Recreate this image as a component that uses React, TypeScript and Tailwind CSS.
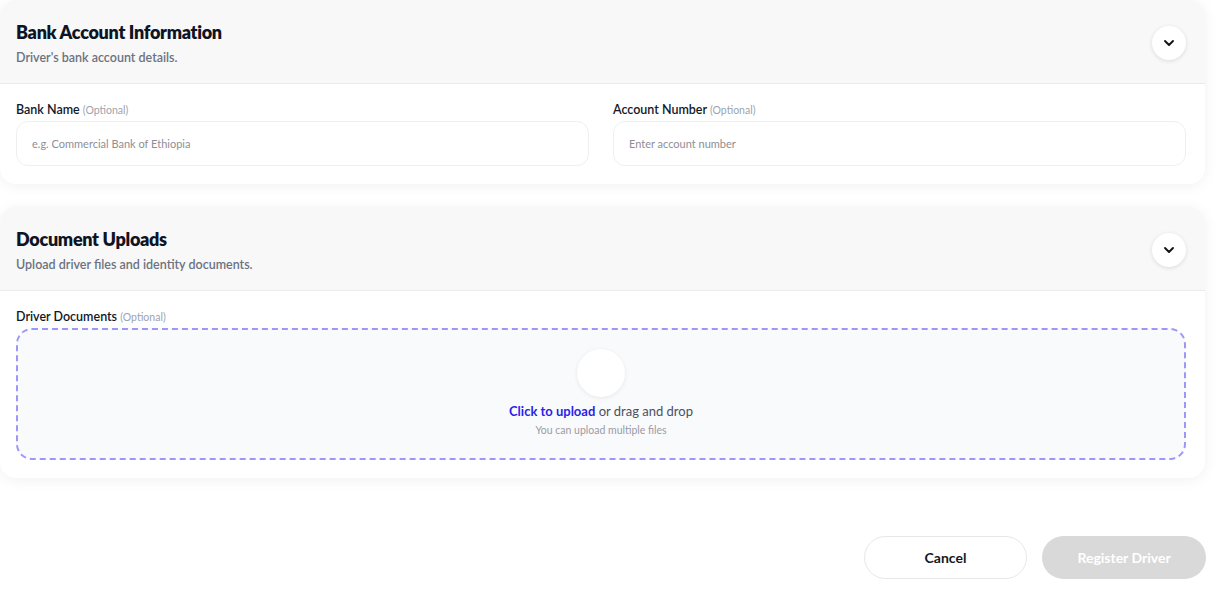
import { ChevronDown } from 'lucide-react';

const font = { fontFamily: '"Lato", "Noto Sans", sans-serif' };

interface SectionHeaderProps {
  title: string;
  subtitle: string;
}

const SectionHeader = ({ title, subtitle }: SectionHeaderProps) => (
  <div className="flex h-[84px] items-center justify-between border-b border-[#ebebeb] bg-[#f8f8f8] pl-4 pr-[19px]">
    <div className="pt-[2px]">
      <h3 className="text-[18px] font-extrabold leading-6 tracking-[-0.3px] text-[#0f1424]">{title}</h3>
      <p className="mt-[6px] text-[12.5px] font-semibold leading-4 text-[#6b7280]">{subtitle}</p>
    </div>
    <button className="mt-[2px] flex h-[34px] w-[34px] items-center justify-center rounded-full bg-white shadow-[0_1px_4px_rgba(0,0,0,0.12)]">
      <ChevronDown className="h-4 w-4 text-[#111]" strokeWidth={2.8} />
    </button>
  </div>
);

interface FieldProps {
  label: string;
  placeholder: string;
}

const Field = ({ label, placeholder }: FieldProps) => (
  <div>
    <label className="block text-[12.5px] font-semibold leading-4 text-[#111827]">
      {label} <span className="text-[10.5px] font-normal text-[#9ca3af]">(Optional)</span>
    </label>
    <input
      className="mt-[3px] h-[45px] w-full rounded-xl border border-[#efefef] bg-white px-[15px] text-[11px] text-[#111] outline-none placeholder:text-[#8e8e96]"
      placeholder={placeholder}
    />
  </div>
);

const App = () => {
  return (
    <div className="min-h-[595px] bg-white" style={font}>
      <div className="w-[1205px]">
        <section className="overflow-hidden rounded-2xl bg-white shadow-[0_2px_14px_rgba(0,0,0,0.06)]">
          <SectionHeader title="Bank Account Information" subtitle="Driver's bank account details." />
          <div className="grid grid-cols-2 gap-6 pb-[18px] pl-4 pr-[19px] pt-[18px]">
            <Field label="Bank Name" placeholder="e.g. Commercial Bank of Ethiopia" />
            <Field label="Account Number" placeholder="Enter account number" />
          </div>
        </section>

        <section className="mt-[23px] overflow-hidden rounded-2xl bg-white shadow-[0_2px_14px_rgba(0,0,0,0.06)]">
          <SectionHeader title="Document Uploads" subtitle="Upload driver files and identity documents." />
          <div className="pb-[18px] pl-4 pr-[19px] pt-[18px]">
            <label className="block text-[12.5px] font-semibold leading-4 text-[#111827]">
              Driver Documents <span className="text-[10.5px] font-normal text-[#9ca3af]">(Optional)</span>
            </label>
            <div className="mt-[3px] flex h-[132px] cursor-pointer flex-col items-center justify-center rounded-2xl border-2 border-dashed border-[#9d97f7] bg-[#f9fafc] pb-1">
              <div className="h-12 w-12 rounded-full bg-white shadow-[0_1px_4px_rgba(0,0,0,0.08)]" />
              <p className="mt-[6px] text-[13px] leading-4 text-[#4b5060]">
                <span className="font-bold text-[#2a1fe8]">Click to upload</span> or drag and drop
              </p>
              <p className="mt-[5px] text-[10.5px] leading-3 text-[#9a9aa4]">You can upload multiple files</p>
            </div>
          </div>
        </section>

        <div className="mt-[58px] flex justify-end gap-[15px]">
          <button className="h-[43px] w-[163px] rounded-full border border-[#e5e7eb] bg-white text-[14px] font-bold text-[#111827]">
            Cancel
          </button>
          <button className="mr-[-1px] h-[43px] w-[164px] rounded-full bg-[#d9d9d9] text-[14px] font-bold text-white" disabled>
            Register Driver
          </button>
        </div>
      </div>
    </div>
  );
};

export default App;
